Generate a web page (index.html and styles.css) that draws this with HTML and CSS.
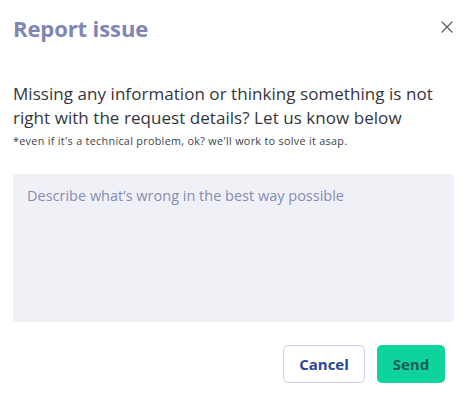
FILE: index.html
```html
<!DOCTYPE html>
<html lang="en">
<head>
<meta charset="utf-8">
<title>Report issue</title>
<link rel="stylesheet" href="styles.css">
</head>
<body>
<div class="modal">
  <div class="header">
    <h1 class="title">Report issue</h1>
    <button class="close" aria-label="Close">
      <svg width="12" height="12" viewBox="0 0 12 12"><path d="M1 1L11 11M11 1L1 11" stroke="#5f6470" stroke-width="1.4" stroke-linecap="round"/></svg>
    </button>
  </div>
  <p class="lead">Missing any information or thinking something is not right with the request details? Let us know below</p>
  <p class="note">*even if it's a technical problem, ok? we'll work to solve it asap.</p>
  <textarea class="field" placeholder="Describe what’s wrong in the best way possible"></textarea>
  <div class="actions">
    <button class="btn btn-cancel">Cancel</button>
    <button class="btn btn-send">Send</button>
  </div>
</div>
</body>
</html>
```

FILE: styles.css
```css
* { box-sizing: border-box; }
html, body { margin: 0; background: #fff; }
body { font-family: "Open Sans", "Liberation Sans", sans-serif; }
.modal {
  width: 468px;
  padding: 14px 14px 0 13px;
  display: flex;
  flex-direction: column;
}
.header {
  display: flex;
  justify-content: space-between;
  align-items: flex-start;
  height: 68px;
}
.title {
  margin: 0;
  font-size: 22px;
  line-height: 28px;
  font-weight: 700;
  color: #7d86b4;
  letter-spacing: -0.1px;
}
.close {
  border: 0;
  background: none;
  padding: 0;
  margin: 7px 1px 0 0;
  width: 12px;
  height: 12px;
  display: flex;
}
.lead {
  margin: 0;
  font-size: 17px;
  line-height: 24px;
  color: #34363e;
  width: 441px;
  letter-spacing: 0.05px;
}
.note {
  margin: 4px 0 0;
  font-size: 10.8px;
  line-height: 14px;
  color: #3e414a;
  letter-spacing: 0.3px;
}
.field {
  margin-top: 26px;
  width: 441px;
  height: 148px;
  border: 0;
  border-radius: 4px;
  background: #f0f1f6;
  padding: 12px 14px;
  resize: none;
  font-family: inherit;
  font-size: 14.5px;
  line-height: 20px;
  color: #2e3038;
  outline: none;
}
.field::placeholder { color: #858cb6; opacity: 1; }
.actions {
  display: flex;
  justify-content: flex-end;
  gap: 12px;
  margin-top: 23px;
  padding-right: 9px;
}
.btn {
  height: 38px;
  border-radius: 5px;
  font-family: inherit;
  font-size: 15px;
  font-weight: 700;
  padding: 0;
  cursor: pointer;
}
.btn-cancel {
  width: 82px;
  background: #fff;
  border: 1px solid #c9cde6;
  color: #2a4596;
}
.btn-send {
  width: 68px;
  background: #0fd39c;
  border: 0;
  color: #1d5e59;
}
```
